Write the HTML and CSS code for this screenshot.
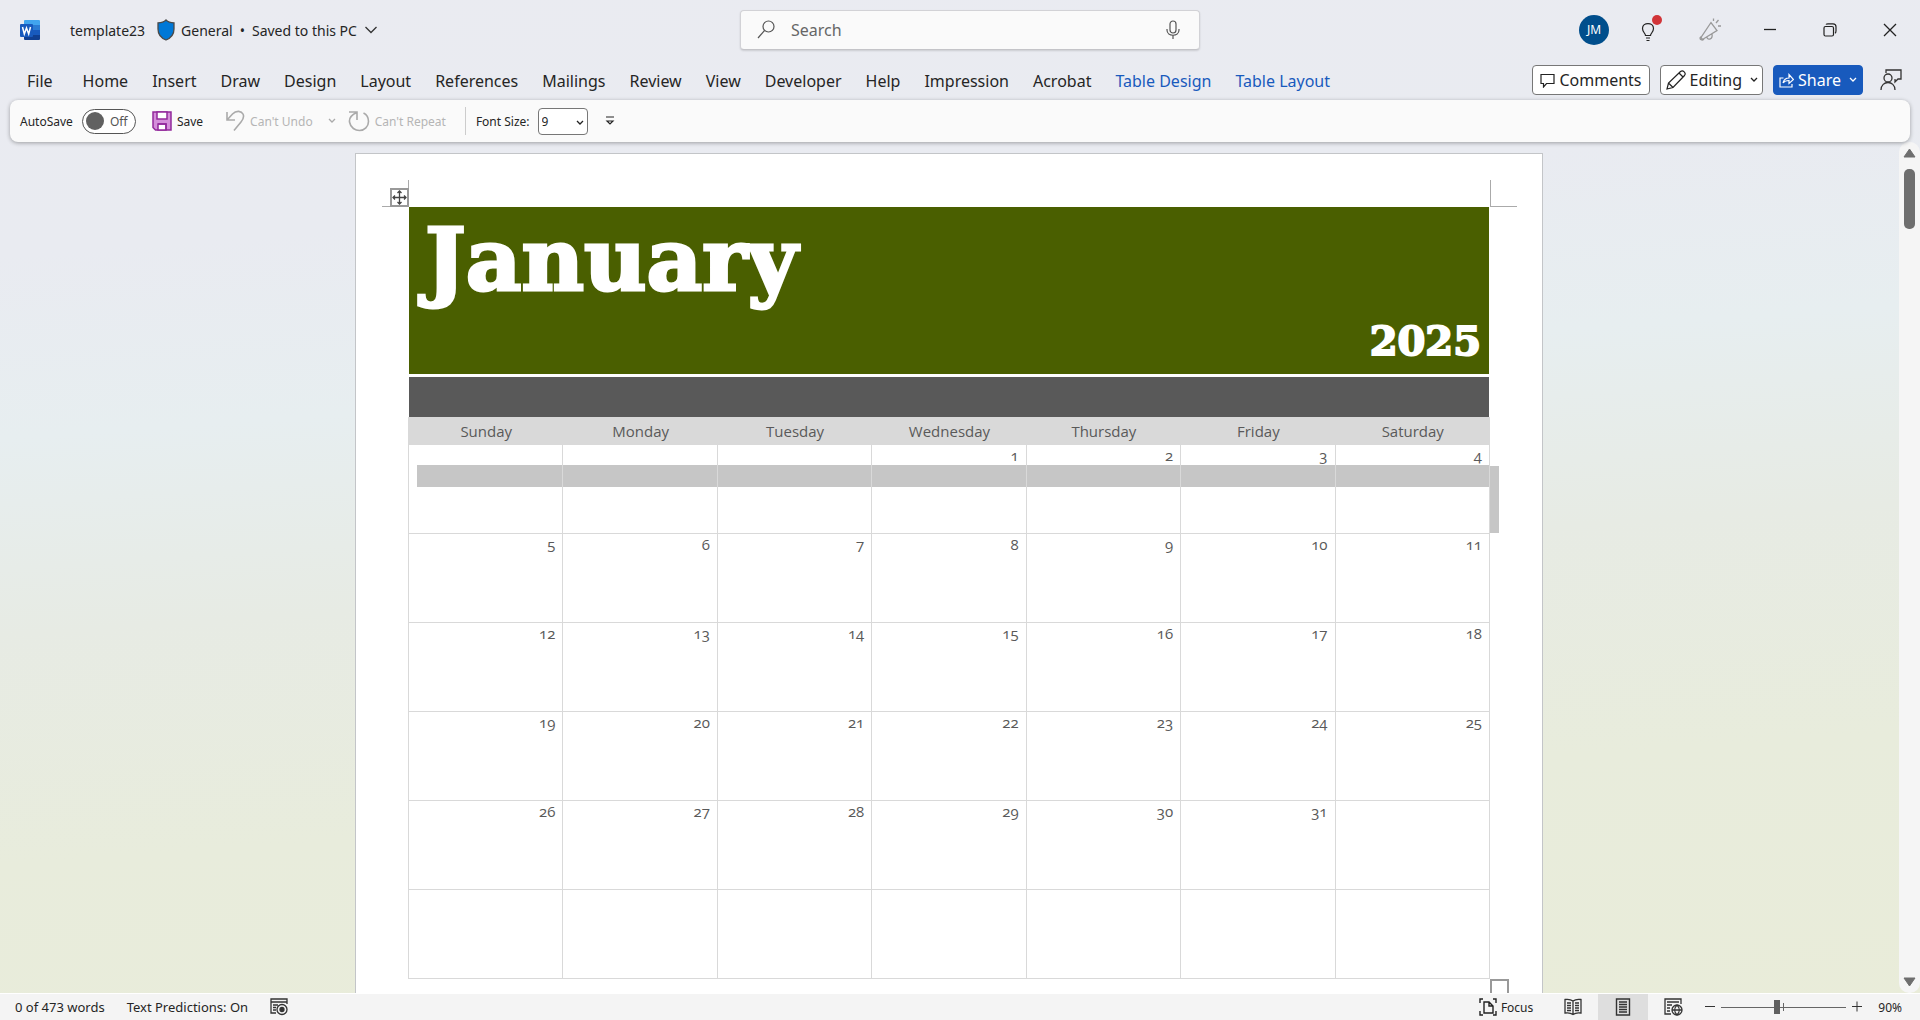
FILE: index.html
```html
<!DOCTYPE html>
<html lang="en">
<head>
<meta charset="utf-8">
<title>template23 - Word</title>
<link rel="stylesheet" href="styles.css">
</head>
<body>
<header class="titlebar">
  <div class="title-left">
    <svg class="logo" width="20" height="20" viewBox="0 0 20 20">
      <path d="M5 0h14a1 1 0 0 1 1 1v4H4V1a1 1 0 0 1 1-1z" fill="#41a5ee"/>
      <path d="M4 5h16v5H4z" fill="#2b7cd3"/>
      <path d="M4 10h16v5H4z" fill="#185abd"/>
      <path d="M4 15h16v4a1 1 0 0 1-1 1H5a1 1 0 0 1-1-1z" fill="#103f91"/>
      <rect y="4" width="13" height="13" rx="1" fill="#185abd"/>
      <path d="M2.500 7l1.800 7L6.500 8l2.200 6 1.800-7" fill="none" stroke="#fff" stroke-width="1.500"/>
    </svg>
    <span class="doc-name">template23</span>
    <svg width="18" height="22" viewBox="0 0 18 22"><path d="M9 1c2 2 5 2.800 8 2.800V10c0 5-3 9-8 11-5-2-8-6-8-11V3.800C4 3.800 7 3 9 1z" fill="#0078d7" stroke="#4a4a4a" stroke-width="1.300"/></svg>
    <button class="status-menu" type="button"><span>General</span><span>•</span><span>Saved to this PC</span>
      <svg width="14" height="8" viewBox="0 0 14 8"><path d="M1.500 1L7 6.500 12.500 1" fill="none" stroke="#333" stroke-width="1.300"/></svg>
    </button>
  </div>
  <label class="search">
    <svg width="18" height="20" viewBox="0 0 18 20" fill="none" stroke="#555" stroke-width="1.200"><circle cx="11.500" cy="6.500" r="5.500"/><path d="M7.500 10.500L1 18"/></svg>
    <input type="text" placeholder="Search" aria-label="Search">
    <svg width="14" height="20" viewBox="0 0 14 20" fill="none" stroke="#555" stroke-width="1.200"><rect x="4" y="1" width="6" height="12" rx="3"/><path d="M1 9v1c0 7 12 7 12 0V9M7 15v4"/></svg>
  </label>
  <div class="title-right">
    <span class="avatar">JM</span>
    <button class="icon-btn" type="button" aria-label="Tips">
      <svg width="24" height="36" viewBox="0 0 24 36" fill="none" stroke="#222" stroke-width="1.200"><path d="M7.500 23.500c0-2-3-3.500-3-7 0-6.500 11-6.500 11 0 0 3.500-3 5-3 7zM8 26h4M8.500 28.500h3"/><circle cx="19" cy="8" r="5" fill="#d13438" stroke="none"/></svg>
    </button>
    <button class="icon-btn" type="button" aria-label="Announcements">
      <svg width="24" height="24" viewBox="0 0 24 24" fill="none" stroke="#999" stroke-width="1.300"><path d="M13 4.500L3 19.500l1.500 2L19 12.500zM6 21c-1 2-4 1-4-1l1-1.500M9 19.500c1 3 6 2 5-3.500M15.500 3V.5M18 5l2.500-3M20 8h3"/></svg>
    </button>
    <button class="icon-btn" type="button" aria-label="Minimize"><svg width="14" height="14" viewBox="0 0 14 14"><path d="M1 6.500h12" stroke="#222" stroke-width="1.300"/></svg></button>
    <button class="icon-btn" type="button" aria-label="Restore"><svg width="14" height="14" viewBox="0 0 14 14" fill="none" stroke="#222" stroke-width="1.200"><rect x="1" y="3.500" width="9.500" height="9.500" rx="1.500"/><path d="M3 1.500c.5-.7 1-.7 2-.7h5c2 0 3 1 3 3v4c0 1.200 0 2-1 2.500"/></svg></button>
    <button class="icon-btn" type="button" aria-label="Close"><svg width="14" height="14" viewBox="0 0 14 14"><path d="M1 1l12 12M13 1L1 13" stroke="#222" stroke-width="1.300"/></svg></button>
  </div>
</header>

<nav class="tabs">
  <div class="tab-list">
    <a class="file" href="#">File</a><a href="#">Home</a><a href="#">Insert</a><a href="#">Draw</a><a href="#">Design</a><a href="#">Layout</a><a href="#">References</a><a href="#">Mailings</a><a href="#">Review</a><a href="#">View</a><a href="#">Developer</a><a href="#">Help</a><a href="#">Impression</a><a href="#">Acrobat</a><a class="context" href="#">Table Design</a><a class="context" href="#">Table Layout</a>
  </div>
  <div class="tab-actions">
    <button class="action comments" type="button"><svg width="15" height="15" viewBox="0 0 15 15"><path d="M1 1.500h13v9H6.500L3.500 14v-3.500H1z" fill="none" stroke="#222" stroke-width="1.200"/></svg>Comments</button>
    <button class="action editing" type="button"><svg width="20" height="20" viewBox="0 0 20 20" fill="none" stroke="#222" stroke-width="1.200"><path d="M1 19l1.500-6L14.500 1.500c2.500-2 6 1.500 4 4L7 17.500zM2.500 13L7 17.500M13 3l4 4"/></svg>Editing<svg width="8" height="6" viewBox="0 0 8 6"><path d="M1 1l3 3 3-3" fill="none" stroke="#222" stroke-width="1.300"/></svg></button>
    <button class="action share" type="button"><svg width="15" height="15" viewBox="0 0 15 15" fill="none" stroke="#fff" stroke-width="1.200"><path d="M4.500 5H1v9h12v-3M4 10c1-4 3-5 6-5V1.500l4.500 5-4.500 4V7.500C7 7.500 5.500 8 4 10z"/></svg>Share<svg width="8" height="6" viewBox="0 0 8 6"><path d="M1 1l3 3 3-3" fill="none" stroke="#fff" stroke-width="1.300"/></svg></button>
    <button class="icon-btn presence" type="button" aria-label="Catch up"><svg width="22" height="22" viewBox="0 0 22 22" fill="none" stroke="#333" stroke-width="1.300"><path d="M6 4V1h15v9h-3l-3 3v-3"/><circle cx="8" cy="9" r="4"/><path d="M1 21c0-10 14-10 14 0"/></svg></button>
  </div>
</nav>

<div class="quickbar">
  <label class="autosave"><span>AutoSave</span><span class="switch"><input type="checkbox" aria-label="AutoSave"><span>Off</span></span></label>
  <button class="tool save" type="button"><svg width="20" height="20" viewBox="0 0 20 20" stroke="#932a9c" stroke-width="1.500"><path d="M1 1h18v18H3.500L1 16.500z" fill="#d48fda"/><path d="M5 1h10v7H5zM6 19v-6h8v6z" fill="#fff"/><path d="M6 13h8v6" fill="none"/></svg>Save</button>
  <button class="tool undo" type="button" disabled><svg width="20" height="22" viewBox="0 0 20 22" fill="none" stroke="#aaa" stroke-width="1.600"><path d="M2 2v8h8M2 10l5.500-6c4-4 9-3 10.500 0 1.500 3 .5 5-2 8l-7 8.500"/></svg>Can't Undo<svg class="undo-arrow" width="8" height="6" viewBox="0 0 8 6"><path d="M1 1l3 3 3-3" fill="none" stroke="#aaa" stroke-width="1.300"/></svg></button>
  <button class="tool repeat" type="button" disabled><svg width="22" height="22" viewBox="0 0 22 22" fill="none" stroke="#aaa" stroke-width="1.600"><path d="M1 2h8v8M9 2.500C3 5 1 8 1.500 12c1 6 6 8.500 10 8.500 5 0 9-4 9-9 0-4-2-7-5-8.500"/></svg>Can't Repeat</button>
  <span class="divider"></span>
  <label class="font-size"><span>Font Size:</span><span class="select-box"><select><option>9</option></select><svg width="8" height="6" viewBox="0 0 8 6"><path d="M1 1l3 3 3-3" fill="none" stroke="#222" stroke-width="1.300"/></svg></span></label>
  <button class="icon-btn more" type="button" aria-label="Customize Quick Access Toolbar"><svg width="10" height="10" viewBox="0 0 10 10" fill="none" stroke="#222" stroke-width="1.200"><path d="M1 1h8M2 5l3 3 3-3z"/></svg></button>
</div>

<main class="workspace">
  <div class="canvas">
    <article class="sheet">
      <i class="crop crop-left"></i><i class="crop crop-right"></i>
      <svg class="move-handle" width="19" height="19" viewBox="0 0 19 19" fill="none"><path d="M1 1h17v17H1z" fill="#fff" stroke="#999" stroke-width="2"/><path d="M9.500 3v13M3 9.500h13M7.500 5l2-2 2 2M7.500 14l2 2 2-2M5 7.500l-2 2 2 2M14 7.500l2 2-2 2" stroke="#444" stroke-width="1.300"/></svg>
      <header class="banner"><h1>January</h1><p>2025</p></header>
      <div class="band"></div>
      <div class="grid-wrap">
      <table class="calendar">
        <thead><tr><th>Sunday</th><th>Monday</th><th>Tuesday</th><th>Wednesday</th><th>Thursday</th><th>Friday</th><th>Saturday</th></tr></thead>
        <tbody>
          <tr class="selected"><td><div></div></td><td><div></div></td><td><div></div></td><td><div>1</div></td><td><div>2</div></td><td><div>3</div></td><td><div>4</div></td></tr>
          <tr><td>5</td><td>6</td><td>7</td><td>8</td><td>9</td><td>10</td><td>11</td></tr>
          <tr><td>12</td><td>13</td><td>14</td><td>15</td><td>16</td><td>17</td><td>18</td></tr>
          <tr><td>19</td><td>20</td><td>21</td><td>22</td><td>23</td><td>24</td><td>25</td></tr>
          <tr><td>26</td><td>27</td><td>28</td><td>29</td><td>30</td><td>31</td><td></td></tr>
          <tr><td></td><td></td><td></td><td></td><td></td><td></td><td></td></tr>
        </tbody>
      </table>
      <i class="row-end"></i><i class="resize-handle"></i>
      </div>
    </article>
  </div>
  <div class="scrollbar">
    <svg width="13" height="10" viewBox="0 0 13 10"><path d="M6.500 1L12 9H1z" fill="#6e6e6e" stroke="#6e6e6e" stroke-linejoin="round"/></svg>
    <span class="thumb"></span>
    <svg width="13" height="10" viewBox="0 0 13 10"><path d="M6.500 9L12 1H1z" fill="#6e6e6e" stroke="#6e6e6e" stroke-linejoin="round"/></svg>
  </div>
</main>

<footer class="statusbar">
  <span class="words">0 of 473 words</span>
  <span class="predictions">Text Predictions: On</span>
  <svg width="18" height="18" viewBox="0 0 18 18" fill="none" stroke="#333" stroke-width="1.300"><path d="M6 15H1V1h16v5M1 4h16M3 7h5M3 9.500h3M3 12h3"/><circle cx="12" cy="11.500" r="5"/><circle cx="12" cy="11.500" r="2" fill="#333"/></svg>
  <div class="view-tools">
    <button class="focus" type="button"><svg width="18" height="18" viewBox="0 0 18 18" fill="none" stroke="#222" stroke-width="1.400"><path d="M1 5V1h3M14 1h3v4M1 13v4h3M17 13v4h-3M5 4h5l4 4v7H5zM10 4v4h4"/></svg>Focus</button>
    <button class="view" type="button" aria-label="Read Mode"><svg width="18" height="18" viewBox="0 0 18 18" fill="none" stroke="#333" stroke-width="1.300"><path d="M9 3C7 1.500 4 1 1 1.500V15c3-.5 6 0 8 1.500 2-1.500 5-2 8-1.500V1.500C14 1 11 1.500 9 3zM9 3v13M3 5h4M3 7.500h4M3 10h4M3 12.500h4M11 5h4M11 7.500h4M11 10h4M11 12.500h4"/></svg></button>
    <button class="view active" type="button" aria-label="Print Layout"><svg width="16" height="18" viewBox="0 0 16 18" fill="none" stroke="#333" stroke-width="1.400"><path d="M1.500 1h13v16h-13zM4 4h8M4 6.500h8M4 9h8M4 11.500h8M4 14h8"/></svg></button>
    <button class="view" type="button" aria-label="Web Layout"><svg width="19" height="18" viewBox="0 0 19 18" fill="none" stroke="#333" stroke-width="1.300"><path d="M7 16H1V1h16v5M3 4h12M3 7h5M3 10h3M3 13h3"/><circle cx="13" cy="12" r="5"/><path d="M8 12h10M13 7c-3 3-3 7 0 10M13 7c3 3 3 7 0 10"/></svg></button>
    <button class="zoom-btn" type="button" aria-label="Zoom out"><svg width="12" height="12" viewBox="0 0 12 12"><path d="M1 5.500h10" stroke="#333"/></svg></button>
    <input class="zoom-slider" type="range" min="10" max="190" value="90" aria-label="Zoom">
    <button class="zoom-btn" type="button" aria-label="Zoom in"><svg width="12" height="12" viewBox="0 0 12 12"><path d="M1 5.500h10M6 .5v10" stroke="#333"/></svg></button>
    <span class="percent">90%</span>
  </div>
</footer>
</body>
</html>
```
FILE: styles.css
```css
* { box-sizing: border-box; }
body {
  margin: 0;
  height: 100vh;
  display: flex;
  flex-direction: column;
  overflow: hidden;
  font-family: "Noto Sans", "Open Sans", sans-serif;
  font-size: 16px;
  color: #252525;
  background: linear-gradient(176deg, #eaebf1 0, #e9ebf1 22%, #e7eef0 38%, #e7ebe4 55%, #e8ecdc 75%, #e9ecd9 100%);
}
button, input, select { font: inherit; color: inherit; }
button { border: 0; background: none; padding: 0; display: flex; align-items: center; }
svg { display: block; flex: none; }
a { color: inherit; text-decoration: none; }

.titlebar {
  height: 60px;
  flex: none;
  display: grid;
  grid-template-columns: 1fr 460px 1fr;
  align-items: center;
  column-gap: 10px;
}
.title-left { display: flex; align-items: center; padding-left: 20px; font-size: 14px; }
.doc-name { margin: 0 12px 0 30px; }
.status-menu { gap: 7px; margin-left: 6px; }
.search {
  display: flex;
  align-items: center;
  height: 40px;
  padding: 0 19px 0 16px;
  margin: 0 -10px 0 10px;
  background: #fafafa;
  border: 1px solid #d2d2d6;
  border-bottom-color: #c4c4c8;
  border-radius: 4px;
  box-shadow: 0 1px 2px #0002;
}
.search input { flex: 1; min-width: 0; border: 0; padding: 0; margin-left: 16px; background: none; outline: 0; }
.search input::placeholder { color: #666; opacity: 1; }
.title-right { display: flex; align-items: center; justify-content: flex-end; }
.avatar {
  width: 30px;
  height: 30px;
  margin-right: 11px;
  border-radius: 50%;
  background: #004e8c;
  color: #fff;
  font-size: 12px;
  line-height: 30px;
  text-align: center;
}
.icon-btn { width: 60px; justify-content: center; }

.tabs { height: 40px; flex: none; display: flex; justify-content: space-between; }
.tab-list { display: flex; gap: 24px; padding-left: 27px; line-height: 42px; }
.file { margin-right: 6px; }
.context { color: #185abd; }
.tab-actions { display: flex; gap: 10px; padding: 5px 11px 0 0; }
.action {
  height: 30px;
  padding: 0 7px;
  gap: 4px;
  white-space: nowrap;
  border: 1px solid #777;
  border-radius: 4px;
  background: #fff;
}
.editing { padding: 0 4px 0 5px; }
.editing svg:last-child, .share svg:last-child { margin-left: 4px; }
.share { background: #185abd; border-color: #185abd; color: #fff; padding: 0 5px; }
.presence { width: 36px; height: 30px; }

.quickbar {
  height: 42px;
  flex: none;
  margin: 0 10px;
  padding: 0 10px;
  display: flex;
  align-items: center;
  background: #fafafa;
  border-radius: 8px;
  box-shadow: 0 1px 4px #0005;
  font-size: 12px;
  position: relative;
}
.autosave, .font-size { display: flex; align-items: center; gap: 9px; }
.switch {
  display: flex;
  align-items: center;
  gap: 6px;
  width: 54px;
  height: 25px;
  padding-left: 3px;
  border: 1px solid #555;
  border-radius: 13px;
  background: #fff;
  color: #555;
}
.switch input { appearance: none; width: 18px; height: 18px; margin: 0; border-radius: 50%; background: #616161; }
.tool { gap: 5px; }
.save { margin-left: 16px; }
.undo { margin-left: 22px; color: #b5b5b5; }
.undo-arrow { margin-left: 10px; }
.repeat { margin-left: 12px; color: #b5b5b5; }
.divider { width: 1px; height: 28px; margin: 0 10px 0 19px; background: #ccc; }
.font-size { gap: 8px; }
.select-box { position: relative; }
.select-box select {
  display: block;
  appearance: none;
  width: 50px;
  height: 27px;
  padding: 0 3px;
  border: 1px solid #777;
  border-radius: 4px;
  background: #fff;
}
.select-box svg { position: absolute; right: 4px; top: 12px; }
.more { width: 44px; }

.workspace { flex: 1; min-height: 0; display: flex; overflow: hidden; }
.canvas { flex: 1; padding: 11px 1px 0 0; overflow: hidden; }
.sheet {
  position: relative;
  max-width: 1188px;
  min-height: 1520px;
  margin: 0 auto;
  padding: 53px 52px;
  background: #fff;
  border: 1px solid #c3c5c8;
}
.crop { position: absolute; top: 26px; width: 27px; height: 27px; border-bottom: 1px solid #aaa; }
.crop-left { left: 26px; border-right: 1px solid #aaa; }
.crop-right { right: 25px; border-left: 1px solid #aaa; }
.move-handle { position: absolute; left: 34px; top: 34px; }
.banner {
  height: 167px;
  margin: 0 1px 3px;
  padding: 0 8px 0 16px;
  display: flex;
  flex-direction: column;
  background: #4a5f00;
  color: #fff;
  font-family: "DejaVu Serif", serif;
}
.banner h1 { margin: 0; font-size: 86px; line-height: 106px; font-weight: 700; -webkit-text-stroke: 3px #fff; }
.banner p { margin: 0; font-size: 40px; line-height: 56px; font-weight: 700; text-align: right; -webkit-text-stroke: 2px #fff; }
.band { height: 40px; margin: 0 1px; background: #595959; }
.grid-wrap { position: relative; }
.calendar {
  width: 100%;
  table-layout: fixed;
  border-collapse: separate;
  border-spacing: 0;
  border-left: 1px solid #d9d9d9;
  color: #595959;
  font-family: "Open Sans", "Noto Sans", sans-serif;
  font-size: 15px;
  font-variant-numeric: oldstyle-nums;
}
.calendar th { height: 28px; padding: 0; background: #d9d9d9; font-weight: 400; line-height: 28px; }
.calendar td {
  height: 89px;
  padding: 0 7px;
  border: solid #d9d9d9;
  border-width: 0 1px 1px 0;
  vertical-align: top;
  text-align: right;
  line-height: 20px;
}
.calendar .selected td { padding: 0; }
.selected div { height: 42px; padding-right: 7px; border-bottom: 22px solid #c6c6c6; }
.selected td:first-child div { margin-left: 8px; }
.row-end { position: absolute; left: 100%; top: 49px; width: 9px; height: 67px; background: #c6c6c6; }
.resize-handle { position: absolute; left: 100%; top: 100%; width: 19px; height: 19px; border: 2px solid #999; background: #fff; }

.scrollbar {
  width: 21px;
  flex: none;
  display: flex;
  flex-direction: column;
  align-items: center;
  padding: 6px 0;
  background: #f5f5f5;
  border-radius: 10px;
}
.thumb { width: 11px; height: 60px; margin: 11px 0 auto; border-radius: 5px; background: #6e6e6e; }

.statusbar {
  height: 27px;
  flex: none;
  display: flex;
  align-items: center;
  padding-left: 15px;
  border-top: 1px solid #fff;
  background: #f4f4f4;
  font-size: 12px;
}
.words, .predictions { font-size: 13px; }
.predictions { margin: 0 22px; }
.view-tools { display: flex; align-items: center; align-self: stretch; margin-left: auto; padding-right: 18px; }
.focus { gap: 4px; margin-right: 15px; }
.view { width: 50px; height: 26px; justify-content: center; }
.active { background: #dedede; }
.zoom-btn { width: 12px; }
.view + .zoom-btn { margin-left: 6px; }
.zoom-slider {
  appearance: none;
  width: 125px;
  height: 16px;
  margin: 0 5px;
  background: linear-gradient(#666, #666) 50% 50% / 100% 1px no-repeat, linear-gradient(#666, #666) 50% 50% / 1px 8px no-repeat;
}
.zoom-slider::-webkit-slider-thumb { appearance: none; width: 6px; height: 14px; background: #606060; }
.percent { margin-left: 15px; }
```
